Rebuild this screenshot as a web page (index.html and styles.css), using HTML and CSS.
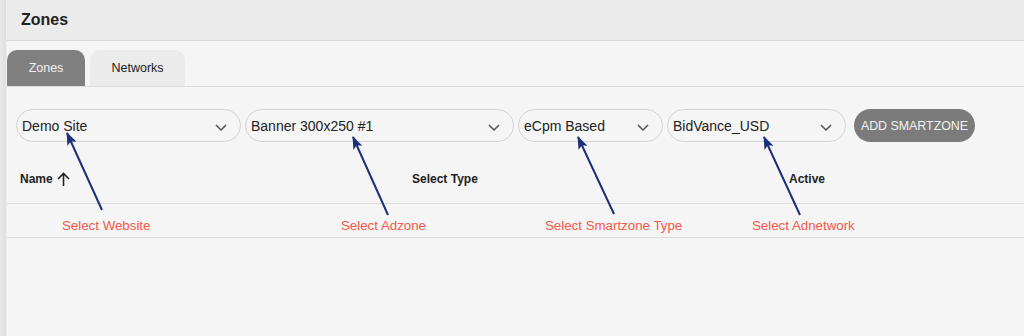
FILE: index.html
```html
<!DOCTYPE html>
<html lang="en">
<head>
    <meta charset="UTF-8">
    <meta name="viewport" content="width=device-width, initial-scale=1.0">
    <title>Zones</title>
    <link rel="stylesheet" href="styles.css">
</head>
<body>
    <div class="edge"></div>
    <div class="main">
        <div class="topbar">Zones</div>

        <div class="tabs">
            <div class="tab active">Zones</div>
            <div class="tab networks">Networks</div>
        </div>

        <div class="toolbar">
            <div class="select w-site">
                <span>Demo Site</span>
                <svg class="chev" width="12" height="7" viewBox="0 0 12 7"><path d="M1 1 L6 6 L11 1" fill="none" stroke="#555" stroke-width="1.5"/></svg>
            </div>
            <div class="select w-zone">
                <span>Banner 300x250 #1</span>
                <svg class="chev" width="12" height="7" viewBox="0 0 12 7"><path d="M1 1 L6 6 L11 1" fill="none" stroke="#555" stroke-width="1.5"/></svg>
            </div>
            <div class="select w-type">
                <span>eCpm Based</span>
                <svg class="chev" width="12" height="7" viewBox="0 0 12 7"><path d="M1 1 L6 6 L11 1" fill="none" stroke="#555" stroke-width="1.5"/></svg>
            </div>
            <div class="select w-net">
                <span>BidVance_USD</span>
                <svg class="chev" width="12" height="7" viewBox="0 0 12 7"><path d="M1 1 L6 6 L11 1" fill="none" stroke="#555" stroke-width="1.5"/></svg>
            </div>
            <button class="add">ADD SMARTZONE</button>
        </div>

        <div class="thead">
            <div class="th">Name
                <svg class="sort" width="13" height="15" viewBox="0 0 13 15"><path d="M6.5 14 V1.5 M1 7 L6.5 1.5 L12 7" fill="none" stroke="#222" stroke-width="1.6"/></svg>
            </div>
            <div class="th">Select Type</div>
            <div class="th">Active</div>
        </div>
        <div class="row"></div>
    </div>

    <!-- annotations drawn over the screenshot -->
    <div class="notes">
        <span class="note n1">Select Website</span>
        <span class="note n2">Select Adzone</span>
        <span class="note n3">Select Smartzone Type</span>
        <span class="note n4">Select Adnetwork</span>
        <svg class="arrows" width="1024" height="336" viewBox="0 0 1024 336">
            <defs>
                <marker id="ah" viewBox="0 0 13 10" refX="12" refY="5" markerWidth="13" markerHeight="10" markerUnits="userSpaceOnUse" orient="auto">
                    <path d="M0 0 L13 5 L0 10 L3 5 z" fill="#1d2f78"/>
                </marker>
            </defs>
            <g stroke="#1d2f78" stroke-width="2" marker-end="url(#ah)">
                <line x1="102" y1="210" x2="67" y2="133"/>
                <line x1="388" y1="215" x2="353" y2="137"/>
                <line x1="614" y1="214" x2="578" y2="137"/>
                <line x1="800" y1="215" x2="764" y2="137"/>
            </g>
        </svg>
    </div>
</body>
</html>
```
FILE: styles.css
```css
body {
    margin: 0;
    height: 336px;
    display: flex;
    position: relative;
    overflow: hidden;
    font-family: "Liberation Sans", Arial, sans-serif;
    background-color: #f5f5f5;
    color: #222;
}
.edge {
    width: 6px;
    background: linear-gradient(to right, #e9e9e9, #dedede);
    border-right: 1px solid #efefef;
}
.main {
    flex: 1;
}
.topbar {
    height: 40px;
    display: flex;
    align-items: center;
    padding-left: 14px;
    font-size: 16px;
    font-weight: bold;
    background-color: #ebebeb;
    border-bottom: 1px solid #d9d9d9;
    box-sizing: content-box;
    margin-top: -4px;
    padding-top: 4px;
}
.tabs {
    display: flex;
    gap: 5px;
    margin-top: 9px;
    border-bottom: 1px solid #dcdcdc;
}
.tab {
    height: 36px;
    display: flex;
    align-items: center;
    justify-content: center;
    font-size: 12.5px;
    border-radius: 10px 10px 0 0;
    background-color: #ebebeb;
    color: #222;
}
.tab.active {
    width: 78px;
    background-color: #808080;
    color: #f2f2f2;
}
.tab.networks {
    width: 95px;
}
.toolbar {
    display: flex;
    gap: 4px;
    padding: 22px 0 0 9px;
}
.select {
    height: 33px;
    box-sizing: border-box;
    border: 1px solid #d2d2d2;
    border-radius: 17px;
    display: flex;
    align-items: center;
    justify-content: space-between;
    padding: 0 13px 0 5px;
    font-size: 14px;
    color: #222;
}
.chev {
    margin-top: 3px;
}
.w-site { width: 225px; }
.w-zone { width: 269px; }
.w-type { width: 145px; }
.w-net  { width: 179px; }
.add {
    height: 33px;
    width: 121px;
    margin-left: 4px;
    border: none;
    border-radius: 17px;
    background-color: #7b7b7b;
    color: #f2f2f2;
    font-family: "Liberation Sans", Arial, sans-serif;
    font-size: 12.4px;
    padding: 0;
}
.thead {
    height: 48px;
    padding: 13px 0 0 13px;
    display: grid;
    grid-template-columns: 392px 377px 1fr;
    align-items: center;
    border-bottom: 1px solid #dedede;
}
.th {
    font-size: 12px;
    font-weight: bold;
    display: flex;
    align-items: center;
    gap: 4px;
}
.row {
    height: 33px;
    border-bottom: 1px solid #dedede;
}
.notes {
    position: absolute;
    inset: 0;
    pointer-events: none;
}
.note {
    position: absolute;
    top: 218px;
    font-size: 13.3px;
    color: #f3584a;
}
.n1 { left: 62px; }
.n2 { left: 341px; }
.n3 { left: 545px; }
.n4 { left: 752px; }
.arrows {
    position: absolute;
    left: 0;
    top: 0;
}
```
